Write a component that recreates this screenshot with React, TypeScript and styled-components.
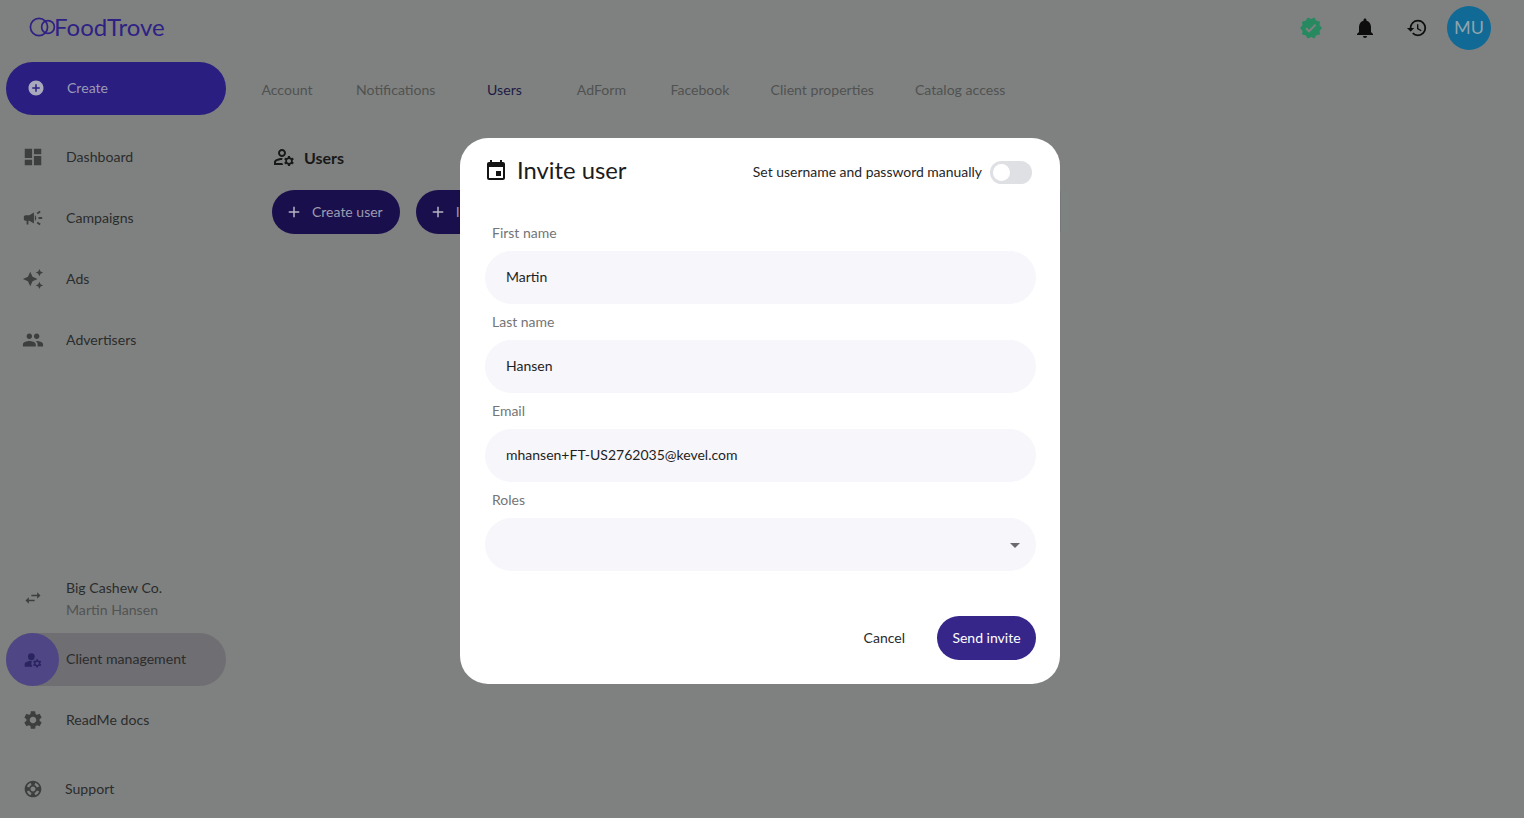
import React from "react";
import { createGlobalStyle, styled } from "styled-components";
import {
  MdAdd,
  MdAddCircle,
  MdArrowDropDown,
  MdAutoAwesome,
  MdCampaign,
  MdDashboard,
  MdEvent,
  MdHistory,
  MdManageAccounts,
  MdNotifications,
  MdOutlineManageAccounts,
  MdPeople,
  MdSettings,
  MdSupport,
  MdSwapHoriz,
  MdVerified,
} from "react-icons/md";

const GlobalStyle = createGlobalStyle`
  html, body {
    margin: 0;
    padding: 0;
    height: 100%;
    overflow: hidden;
  }
  body {
    font-family: "Lato", "Liberation Sans", sans-serif;
    background: #7f8180;
  }
`;

const Page = styled.div`
  position: relative;
  width: 1524px;
  height: 818px;
  background: #7f8180;
  overflow: hidden;
`;

const TopBar = styled.header`
  display: flex;
  align-items: center;
  height: 55px;
  padding: 0 33px 0 29px;
`;

const Logo = styled.div`
  display: flex;
  align-items: center;
  margin-top: -1px;
  color: #2e2184;
`;

const LogoText = styled.span`
  margin: -1px 0 0 -2px;
  font-family: "Lato", sans-serif;
  font-size: 24px;
  font-weight: 400;
`;

const TopActions = styled.div`
  display: flex;
  align-items: center;
  margin-left: auto;
`;

const TopIcon = styled.span<{ $color?: string; $gap: number }>`
  display: flex;
  margin-right: ${(p) => p.$gap}px;
  color: ${(p) => p.$color || "#0d0d0d"};
`;

const Avatar = styled.div`
  display: flex;
  align-items: center;
  justify-content: center;
  box-sizing: border-box;
  width: 44px;
  height: 44px;
  padding-bottom: 2px;
  border-radius: 50%;
  background: #106a95;
  color: #8fa3ad;
  font-size: 18px;
`;

const Body = styled.div`
  display: flex;
  height: 763px;
`;

const Sidebar = styled.nav`
  display: flex;
  flex-direction: column;
  width: 220px;
  margin-left: 6px;
  padding-top: 7px;
`;

const CreateButton = styled.div`
  display: flex;
  align-items: center;
  flex: 0 0 53px;
  box-sizing: border-box;
  margin-bottom: 15px;
  padding: 0 0 2px 21px;
  border-radius: 27px;
  background: #2a1e80;
  color: #9b9ab5;
  font-size: 14.1px;
  svg {
    flex: 0 0 18px;
    margin-right: 22px;
    color: #a9a9bd;
  }
`;

const NavItem = styled.div<{ $active?: boolean }>`
  display: flex;
  align-items: center;
  flex: 0 0 53px;
  margin-bottom: ${(p) => (p.$active ? 7 : 8)}px;
  border-radius: 27px;
  background: ${(p) => (p.$active ? "#6f6e72" : "transparent")};
  color: #2b2c2c;
  font-size: 14.1px;
`;

const NavIcon = styled.span<{ $active?: boolean }>`
  display: flex;
  align-items: center;
  justify-content: center;
  flex: 0 0 53px;
  height: 53px;
  margin-right: 7px;
  border-radius: 50%;
  background: ${(p) => (p.$active ? "#4f4785" : "transparent")};
  color: ${(p) => (p.$active ? "#2a2460" : "#3d3e3e")};
`;

const RaisedLabel = styled.span`
  margin-bottom: 2px;
`;

const Spacer = styled.div`
  flex: 1;
`;

const AccountItem = styled(NavItem)`
  svg {
    margin-bottom: 2px;
  }
`;

const AccountText = styled.div`
  display: flex;
  flex-direction: column;
  gap: 4px;
  line-height: 18px;
`;

const AccountSub = styled.span`
  color: #515352;
`;

const SupportItem = styled(NavItem)`
  margin-top: 8px;
  margin-bottom: 3px;
`;

const SupportLabel = styled.span`
  margin-left: -1px;
`;

const Main = styled.main`
  flex: 1;
  padding-left: 13px;
`;

const Tabs = styled.div`
  display: flex;
  gap: 1px;
  height: 53px;
  margin-top: 9px;
  margin-bottom: 28px;
`;

const Tab = styled.div<{ $active?: boolean }>`
  display: flex;
  align-items: center;
  justify-content: center;
  min-width: 96px;
  padding: 0 20px 2px;
  box-sizing: border-box;
  color: ${(p) => (p.$active ? "#1c1b45" : "#505251")};
  font-size: 14.1px;
`;

const SectionTitle = styled.h2`
  display: flex;
  align-items: center;
  gap: 8px;
  height: 24px;
  margin: 0 0 21px 33px;
  color: #181818;
  font-size: 16px;
  font-weight: 700;
`;

const Toolbar = styled.div`
  display: flex;
  gap: 16px;
  margin-left: 33px;
`;

const ToolButton = styled.div`
  display: flex;
  flex: 0 0 auto;
  align-items: center;
  gap: 9px;
  height: 44px;
  padding: 0 17px 0 13px;
  border-radius: 22px;
  background: #1a0f4d;
  color: #9d9cb0;
  font-size: 14px;
  svg {
    color: #b6b5c2;
  }
`;

const ToolSliver = styled.div`
  flex: 0 0 auto;
  display: flex;
  width: 16px;
  height: 41px;
  margin-top: 1px;
  margin-left: 500px;
  background: #7c8380;
  &::before {
    content: "";
    width: 8px;
    background: #77767a;
  }
`;

const Overlay = styled.div`
  position: absolute;
  inset: 0;
  padding: 138px 0 0 460px;
`;

const Modal = styled.section`
  box-sizing: border-box;
  width: 600px;
  height: 546px;
  padding: 21px 24px 24px 25px;
  border-radius: 28px;
  background: #fff;
`;

const ModalHeader = styled.div`
  display: flex;
  align-items: center;
  height: 26px;
  margin-bottom: 40px;
  padding-right: 4px;
`;

const ModalTitle = styled.h1`
  margin: -4px 0 0 9px;
  color: #1c1c1c;
  font-size: 23.8px;
  font-weight: 400;
`;

const TitleIcon = styled.span`
  display: flex;
  margin: -2px 0 0 -1px;
  color: #141414;
`;

const SwitchLabel = styled.span`
  margin: 0 8px 1px auto;
  color: #262626;
  font-size: 13.95px;
`;

const SwitchTrack = styled.div`
  position: relative;
  width: 42px;
  height: 23px;
  border-radius: 12px;
  background: #dfe0e4;
  &::after {
    content: "";
    position: absolute;
    top: 3px;
    left: 3px;
    width: 17px;
    height: 17px;
    border-radius: 50%;
    background: #fff;
  }
`;

const Field = styled.div`
  margin-bottom: 10px;
`;

const FieldLabel = styled.label`
  display: block;
  height: 18px;
  margin: 0 0 8px 7px;
  color: #737576;
  font-size: 14px;
  line-height: 16px;
`;

const FieldValue = styled.div`
  display: flex;
  align-items: center;
  justify-content: space-between;
  box-sizing: border-box;
  height: 53px;
  padding: 0 9px 2px 21px;
  border-radius: 27px;
  background: #f6f6fb;
  color: #1f1f1f;
  font-size: 14px;
  svg {
    margin-top: 2px;
    color: #6b6b6f;
  }
`;

const ModalFooter = styled.div`
  display: flex;
  align-items: center;
  justify-content: flex-end;
  gap: 32px;
  margin-top: 45px;
`;

const CancelButton = styled.span`
  margin-bottom: 2px;
  color: #2a2a2a;
  font-size: 14px;
`;

const SendButton = styled.div`
  display: flex;
  align-items: center;
  justify-content: center;
  box-sizing: border-box;
  width: 99px;
  height: 44px;
  padding-bottom: 2px;
  border-radius: 22px;
  background: #37268a;
  color: #fff;
  font-size: 14px;
`;

const LogoMark = () => (
  <svg width="27" height="20" viewBox="0 0 27 20" fill="none" stroke="currentColor" strokeWidth="1.7">
    <circle cx="10" cy="10" r="8.6" />
    <circle cx="19" cy="10" r="6.4" />
  </svg>
);

const fields = [
  { label: "First name", value: "Martin" },
  { label: "Last name", value: "Hansen" },
  { label: "Email", value: "mhansen+FT-US2762035@kevel.com" },
];

const tabs = ["Account", "Notifications", "Users", "AdForm", "Facebook", "Client properties", "Catalog access"];

const navTop = [
  { label: "Dashboard", icon: <MdDashboard size={22} /> },
  { label: "Campaigns", icon: <MdCampaign size={22} /> },
  { label: "Ads", icon: <MdAutoAwesome size={22} /> },
  { label: "Advertisers", icon: <MdPeople size={22} /> },
];

export default function App() {
  return (
    <Page>
      <GlobalStyle />
      <TopBar>
        <Logo>
          <LogoMark />
          <LogoText>FoodTrove</LogoText>
        </Logo>
        <TopActions>
          <TopIcon $color="#26895f" $gap={30}>
            <MdVerified size={24} />
          </TopIcon>
          <TopIcon $gap={29}>
            <MdNotifications size={24} />
          </TopIcon>
          <TopIcon $gap={19}>
            <MdHistory size={22} />
          </TopIcon>
          <Avatar>MU</Avatar>
        </TopActions>
      </TopBar>
      <Body>
        <Sidebar>
          <CreateButton>
            <MdAddCircle size={18} />
            Create
          </CreateButton>
          {navTop.map((item) => (
            <NavItem key={item.label}>
              <NavIcon>{item.icon}</NavIcon>
              {item.label}
            </NavItem>
          ))}
          <Spacer />
          <AccountItem>
            <NavIcon>
              <MdSwapHoriz size={20} />
            </NavIcon>
            <AccountText>
              <span>Big Cashew Co.</span>
              <AccountSub>Martin Hansen</AccountSub>
            </AccountText>
          </AccountItem>
          <NavItem $active>
            <NavIcon $active>
              <MdManageAccounts size={20} />
            </NavIcon>
            <RaisedLabel>Client management</RaisedLabel>
          </NavItem>
          <NavItem>
            <NavIcon>
              <MdSettings size={22} />
            </NavIcon>
            ReadMe docs
          </NavItem>
          <SupportItem>
            <NavIcon>
              <MdSupport size={20} />
            </NavIcon>
            <SupportLabel>Support</SupportLabel>
          </SupportItem>
        </Sidebar>
        <Main>
          <Tabs>
            {tabs.map((tab) => (
              <Tab key={tab} $active={tab === "Users"}>
                {tab}
              </Tab>
            ))}
          </Tabs>
          <SectionTitle>
            <MdOutlineManageAccounts size={24} />
            Users
          </SectionTitle>
          <Toolbar>
            <ToolButton>
              <MdAdd size={18} />
              <RaisedLabel>Create user</RaisedLabel>
            </ToolButton>
            <ToolButton>
              <MdAdd size={18} />
              <RaisedLabel>Invite user</RaisedLabel>
            </ToolButton>
            <ToolSliver />
          </Toolbar>
        </Main>
      </Body>
      <Overlay>
        <Modal>
          <ModalHeader>
            <TitleIcon>
              <MdEvent size={24} />
            </TitleIcon>
            <ModalTitle>Invite user</ModalTitle>
            <SwitchLabel>Set username and password manually</SwitchLabel>
            <SwitchTrack />
          </ModalHeader>
          {fields.map((field) => (
            <Field key={field.label}>
              <FieldLabel>{field.label}</FieldLabel>
              <FieldValue>{field.value}</FieldValue>
            </Field>
          ))}
          <Field>
            <FieldLabel>Roles</FieldLabel>
            <FieldValue>
              <span />
              <MdArrowDropDown size={24} />
            </FieldValue>
          </Field>
          <ModalFooter>
            <CancelButton>Cancel</CancelButton>
            <SendButton>Send invite</SendButton>
          </ModalFooter>
        </Modal>
      </Overlay>
    </Page>
  );
}
